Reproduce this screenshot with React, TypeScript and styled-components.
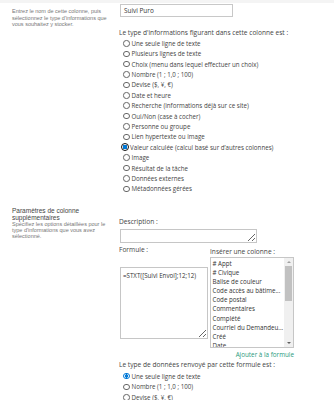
import styled, { createGlobalStyle } from 'styled-components';

const GlobalStyle = createGlobalStyle`
  html, body {
    margin: 0;
    padding: 0;
    background: #fff;
  }
  body {
    width: 334px;
    height: 400px;
    overflow: hidden;
    font-family: 'Open Sans', 'Noto Sans', sans-serif;
    color: #444;
  }
`;

const TopBand = styled.div`
  height: 3px;
  background-color: #f4f4f4;
`;

const Section = styled.div`
  display: flex;
  align-items: flex-start;
`;

const LeftCol = styled.div<{ $top: number }>`
  width: 119px;
  flex: none;
  box-sizing: border-box;
  padding: ${(p) => p.$top}px 2px 0 12px;
  font-family: 'Liberation Sans', Arial, sans-serif;
`;

const RightCol = styled.div<{ $top?: number }>`
  flex: 1;
  padding-top: ${(p) => p.$top || 0}px;
`;

const SideTitle = styled.div`
  font-size: 6.5px;
  line-height: 7.3px;
  color: #444;
  white-space: nowrap;
`;

const SideText = styled.div<{ $lh: number }>`
  font-size: 5.5px;
  line-height: ${(p) => p.$lh}px;
  color: #777;
  white-space: nowrap;
`;

const NameInput = styled.div`
  width: 113px;
  height: 13px;
  margin: 1px 0 0 1px;
  box-sizing: border-box;
  border: 1px solid #c8c8c8;
  padding-left: 3px;
  font-size: 6.4px;
  line-height: 11px;
  color: #333;
`;

const Label = styled.div<{ $top?: number }>`
  font-size: 6.6px;
  line-height: 10.4px;
  margin-top: ${(p) => p.$top || 0}px;
  color: #444;
  white-space: nowrap;
`;

const RadioRow = styled.div<{ $h?: number }>`
  display: flex;
  align-items: center;
  height: ${(p) => p.$h || 10.4}px;
  padding-left: 4px;
  font-size: 6.2px;
  color: #444;
  white-space: nowrap;
`;

const Circle = styled.span<{ $on?: boolean; $focus?: boolean }>`
  flex: none;
  box-sizing: border-box;
  width: ${(p) => (p.$focus ? 8 : 6.5)}px;
  height: ${(p) => (p.$focus ? 8 : 6.5)}px;
  margin-left: ${(p) => (p.$focus ? -2 : 0)}px;
  margin-right: ${(p) => (p.$focus ? 1 : 2)}px;
  border-radius: 50%;
  border: ${(p) =>
    p.$focus ? '1.3px solid #111' : p.$on ? '1px solid #0078d7' : '0.8px solid #666'};
  background: ${(p) =>
    p.$on ? 'radial-gradient(circle, #0078d7 0 52%, #fff 58%)' : '#fff'};
`;

const Box = styled.textarea<{ $w: number; $h: number }>`
  display: block;
  width: ${(p) => p.$w}px;
  height: ${(p) => p.$h}px;
  margin-left: 1px;
  box-sizing: border-box;
  border: 1px solid #c6c6c6;
  padding: 3px 2px;
  font-family: inherit;
  font-size: 6.2px;
  line-height: 9px;
  color: #333;
  resize: both;
  outline: none;
  overflow: hidden;
`;

const FormulaRow = styled.div`
  display: flex;
  align-items: flex-start;
  gap: 1px;
`;

const FormulaCol = styled.div`
  width: 90px;
`;

const InsertCol = styled.div`
  width: 84px;
  padding-top: 4px;
  display: flex;
  flex-direction: column;
`;

const ListBox = styled.div`
  display: flex;
  height: 91px;
  box-sizing: border-box;
  border: 1px solid #c6c6c6;
  overflow: hidden;
`;

const Items = styled.div`
  flex: 1;
  min-width: 0;
  overflow: hidden;
  padding: 0.5px 0 0 1.5px;
`;

const Item = styled.div`
  height: 9.1px;
  line-height: 9.1px;
  font-size: 6.2px;
  color: #333;
  white-space: nowrap;
`;

const Scroll = styled.div`
  width: 9px;
  flex: none;
  display: flex;
  flex-direction: column;
  background: #f0f0f0;
`;

const Arrow = styled.div<{ $down?: boolean }>`
  height: 8px;
  flex: none;
  display: flex;
  align-items: center;
  justify-content: center;
  &::after {
    content: '';
    border-left: 2px solid transparent;
    border-right: 2px solid transparent;
    ${(p) => (p.$down ? 'border-top: 2px solid #606060;' : 'border-bottom: 2px solid #a0a0a0;')}
  }
`;

const Thumb = styled.div`
  height: 35px;
  margin: 0 1px;
  background: #c1c1c1;
`;

const Track = styled.div`
  flex: 1;
`;

const AddLink = styled.div`
  align-self: flex-end;
  margin-top: 1.5px;
  font-size: 6.3px;
  line-height: 10.4px;
  color: #2a9a7d;
`;

const types = [
  'Une seule ligne de texte',
  'Plusieurs lignes de texte',
  'Choix (menu dans lequel effectuer un choix)',
  'Nombre (1 ; 1,0 ; 100)',
  'Devise ($, ¥, €)',
  'Date et heure',
  'Recherche (informations déjà sur ce site)',
  'Oui/Non (case à cocher)',
  'Personne ou groupe',
  'Lien hypertexte ou image',
  'Valeur calculée (calcul basé sur d\u2019autres colonnes)',
  'Image',
  'Résultat de la tâche',
  'Données externes',
  'Métadonnées gérées',
];

const columns = [
  '# Appt',
  '# Civique',
  'Balise de couleur',
  'Code accès au bâtime...',
  'Code postal',
  'Commentaires',
  'Complété',
  'Courriel du Demandeu...',
  'Créé',
  'Date',
];

const returnTypes = ['Une seule ligne de texte', 'Nombre (1 ; 1,0 ; 100)', 'Devise ($, ¥, €)'];

export default function App() {
  return (
    <>
      <GlobalStyle />
      <TopBand />
      <Section>
        <LeftCol $top={5}>
          <SideText $lh={6.6}>
            Entrez le nom de cette colonne, puis
            <br />
            sélectionnez le type d'informations que
            <br />
            vous souhaitez y stocker.
          </SideText>
        </LeftCol>
        <RightCol>
          <NameInput>Suivi Puro</NameInput>
          <Label $top={10.8}>Le type d'informations figurant dans cette colonne est :</Label>
          {types.map((t, i) => (
            <RadioRow key={t}>
              <Circle $on={i === 10} $focus={i === 10} />
              {t}
            </RadioRow>
          ))}
        </RightCol>
      </Section>
      <Section>
        <LeftCol $top={12.5}>
          <SideTitle>
            Paramètres de colonne
            <br />
            supplémentaires
          </SideTitle>
          <SideText $lh={6.15}>
            Spécifiez les options détaillées pour le
            <br />
            type d'informations que vous avez
            <br />
            sélectionné.
          </SideText>
        </LeftCol>
        <RightCol $top={22.8}>
          <Label>Description :</Label>
          <Box $w={137} $h={14} style={{ marginTop: 1.8 }} />
          <FormulaRow>
            <FormulaCol>
              <Label $top={1.8}>Formule :</Label>
              <Box $w={88} $h={72} style={{ marginTop: 11.8 }} defaultValue="=STXT([Suivi Envoi];12;12)" />
            </FormulaCol>
            <InsertCol>
              <Label>Insérer une colonne :</Label>
              <ListBox>
                <Items>
                  {columns.map((c) => (
                    <Item key={c}>{c}</Item>
                  ))}
                </Items>
                <Scroll>
                  <Arrow />
                  <Thumb />
                  <Track />
                  <Arrow $down />
                </Scroll>
              </ListBox>
              <AddLink>Ajouter à la formule</AddLink>
            </InsertCol>
          </FormulaRow>
          <Label>Le type de données renvoyé par cette formule est :</Label>
          {returnTypes.map((t, i) => (
            <RadioRow key={t} $h={10.7}>
              <Circle $on={i === 0} />
              {t}
            </RadioRow>
          ))}
        </RightCol>
      </Section>
    </>
  );
}
